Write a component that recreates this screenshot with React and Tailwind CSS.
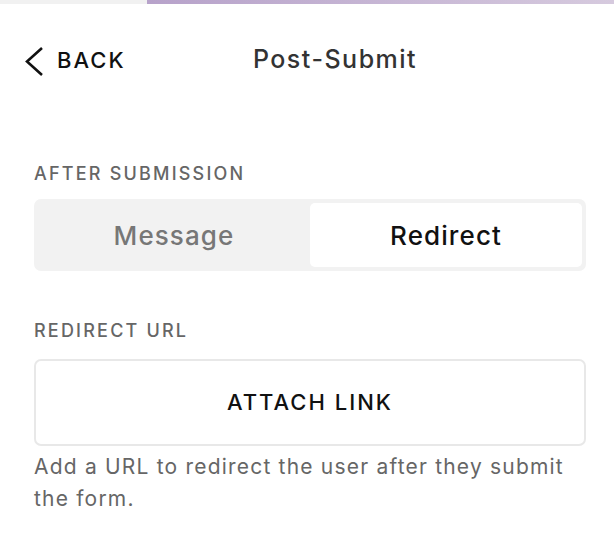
import React, { useState } from "react";

const App = () => {
  const [mode, setMode] = useState("redirect");

  return (
    <div className="w-[614px] h-[536px] bg-white overflow-hidden font-['Inter',sans-serif]">
      <div className="flex h-1">
        <div className="w-[147px] bg-[#f1f1f1]" />
        <div className="flex-1 bg-gradient-to-r from-[#b7a2ca] to-[#d6cade]" />
      </div>

      <div className="relative flex items-center justify-center h-[112px] pl-[56px]">
        <button className="absolute left-[22px] top-[40px] flex items-center gap-[13px] text-[#111] cursor-pointer">
          <svg width="22" height="30" viewBox="0 0 22 30" fill="none">
            <path d="M20 2 L5 15.5 L20 29" stroke="#111" strokeWidth="2.6" />
          </svg>
          <span className="text-[22px] font-medium tracking-[2px]">BACK</span>
        </button>
        <h1 className="text-[25px] font-medium text-[#333] tracking-[1.5px]">Post-Submit</h1>
      </div>

      <div className="pl-[34px] pr-[28px] pt-[46px]">
        <p className="text-[18px] leading-[24px] font-medium text-[#666] tracking-[2.2px]">AFTER SUBMISSION</p>
        <div className="mt-[13px] grid grid-cols-2 bg-[#f2f2f2] rounded-[7px] p-[4px] h-[72px]">
          <button
            onClick={() => setMode("message")}
            className={`rounded-[5px] text-[26px] font-medium tracking-[1.1px] cursor-pointer ${
              mode === "message" ? "bg-white text-[#111]" : "text-[#777]"
            }`}
          >
            Message
          </button>
          <button
            onClick={() => setMode("redirect")}
            className={`rounded-[5px] text-[26px] font-medium tracking-[1.1px] cursor-pointer ${
              mode === "redirect" ? "bg-white text-[#111]" : "text-[#777]"
            }`}
          >
            Redirect
          </button>
        </div>

        <p className="mt-[48px] text-[18px] leading-[24px] font-medium text-[#666] tracking-[2.2px]">REDIRECT URL</p>
        <button className="mt-[16px] w-full h-[87px] border-2 border-[#e8e8e8] rounded-[7px] text-[22px] font-medium text-[#111] tracking-[2px] cursor-pointer">
          ATTACH LINK
        </button>
        <p className="mt-[5px] text-[21px] leading-[32px] text-[#666] tracking-[1.2px]">
          Add a URL to redirect the user after they submit the form.
        </p>
      </div>
    </div>
  );
};

export default App;
